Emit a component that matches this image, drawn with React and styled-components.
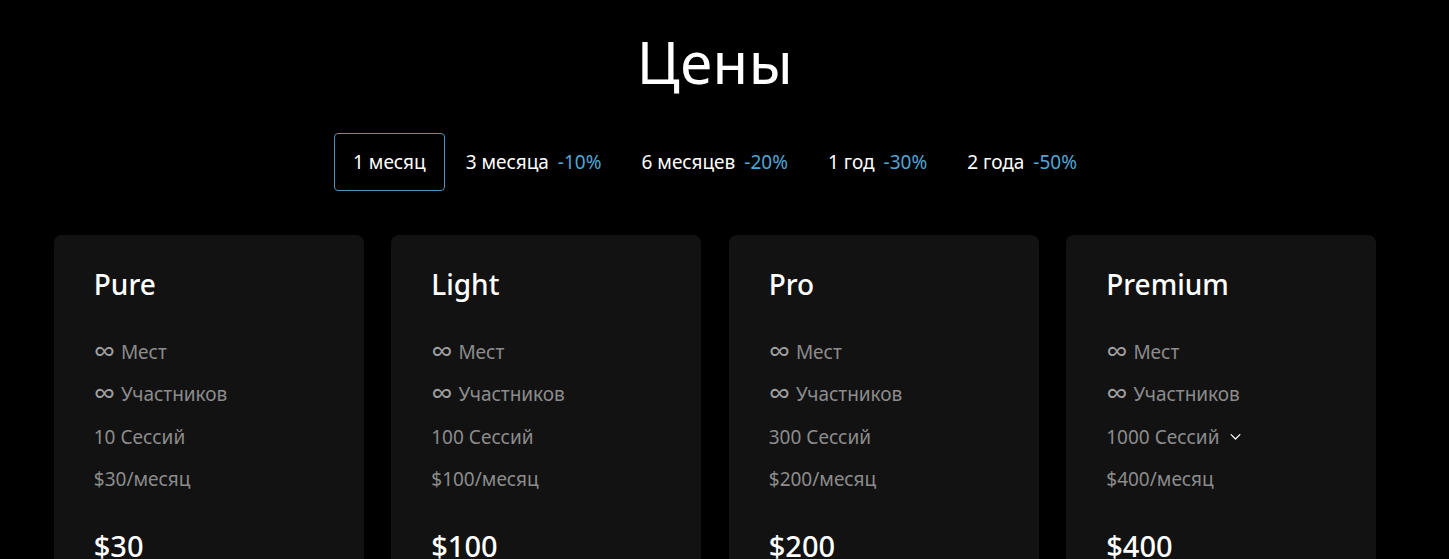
import React, { useState } from 'react';
import styled, { createGlobalStyle } from 'styled-components';

const GlobalStyle = createGlobalStyle`
    html, body {
        margin: 0;
        background: #000;
        color: #fff;
        font-family: "Noto Sans", "Open Sans", sans-serif;
    }
`;

const Page = styled.section`
    width: 1430px;
    padding: 22px 0 0;
    box-sizing: border-box;
    overflow: hidden;
    height: 559px;
`;

const Title = styled.h1`
    margin: 0;
    text-align: center;
    font-size: 58px;
    font-weight: 400;
    line-height: 80px;
    letter-spacing: 0.5px;
`;

const Tabs = styled.div`
    display: flex;
    justify-content: center;
    gap: 2px;
    margin-top: 31px;
`;

const Tab = styled.button`
    display: flex;
    align-items: center;
    gap: 9px;
    height: 58px;
    padding: 0 18px;
    background: transparent;
    border: 1px solid ${p => (p.$active ? '#4f93b8' : 'transparent')};
    border-radius: 4px;
    color: #fff;
    font-family: inherit;
    font-size: 19px;
    cursor: pointer;
`;

const Discount = styled.span`
    color: #4ea6d6;
`;

const Cards = styled.div`
    display: grid;
    grid-template-columns: repeat(4, 310px);
    gap: 27.5px;
    justify-content: center;
    margin-top: 44px;
`;

const Card = styled.article`
    background: #121212;
    border-radius: 8px;
    padding: 31px 40px 40px;
    height: 360px;
`;

const PlanName = styled.h2`
    margin: 0 0 29px;
    font-size: 28px;
    font-weight: 500;
    line-height: 36px;
`;

const Features = styled.ul`
    list-style: none;
    margin: 0;
    padding: 0;
`;

const Feature = styled.li`
    display: flex;
    align-items: center;
    gap: 6px;
    height: 42.3px;
    color: #8c8c8c;
    font-size: 19px;
`;

const Inf = styled.span`
    font-size: 30px;
    line-height: 0;
    color: #a0a0a0;
    margin-top: -3px;
`;

const Price = styled.div`
    margin-top: 26px;
    font-size: 29px;
    font-weight: 500;
    color: #fff;
`;

const ChevronIcon = styled.svg`
    margin-left: 3px;
`;

const Chevron = () => (
    <ChevronIcon width="15" height="15" viewBox="0 0 24 24" fill="none" stroke="#fff" strokeWidth="2" strokeLinecap="round" strokeLinejoin="round">
        <path d="M5 9l7 7 7-7" />
    </ChevronIcon>
);

const periods = [
    { label: '1 месяц' },
    { label: '3 месяца', off: '-10%' },
    { label: '6 месяцев', off: '-20%' },
    { label: '1 год', off: '-30%' },
    { label: '2 года', off: '-50%' },
];

const plans = [
    { name: 'Pure', sessions: '10', price: 30 },
    { name: 'Light', sessions: '100', price: 100 },
    { name: 'Pro', sessions: '300', price: 200 },
    { name: 'Premium', sessions: '1000', price: 400, more: true },
];

export default function App() {
    const [period, setPeriod] = useState(0);
    return (
        <Page>
            <GlobalStyle />
            <Title>Цены</Title>
            <Tabs>
                {periods.map((p, i) => (
                    <Tab key={p.label} $active={i === period} onClick={() => setPeriod(i)}>
                        {p.label}
                        {p.off && <Discount>{p.off}</Discount>}
                    </Tab>
                ))}
            </Tabs>
            <Cards>
                {plans.map(plan => (
                    <Card key={plan.name}>
                        <PlanName>{plan.name}</PlanName>
                        <Features>
                            <Feature><Inf>∞</Inf>Мест</Feature>
                            <Feature><Inf>∞</Inf>Участников</Feature>
                            <Feature>{plan.sessions} Сессий {plan.more && <Chevron />}</Feature>
                            <Feature>${plan.price}/месяц</Feature>
                        </Features>
                        <Price>${plan.price}</Price>
                    </Card>
                ))}
            </Cards>
        </Page>
    );
}
